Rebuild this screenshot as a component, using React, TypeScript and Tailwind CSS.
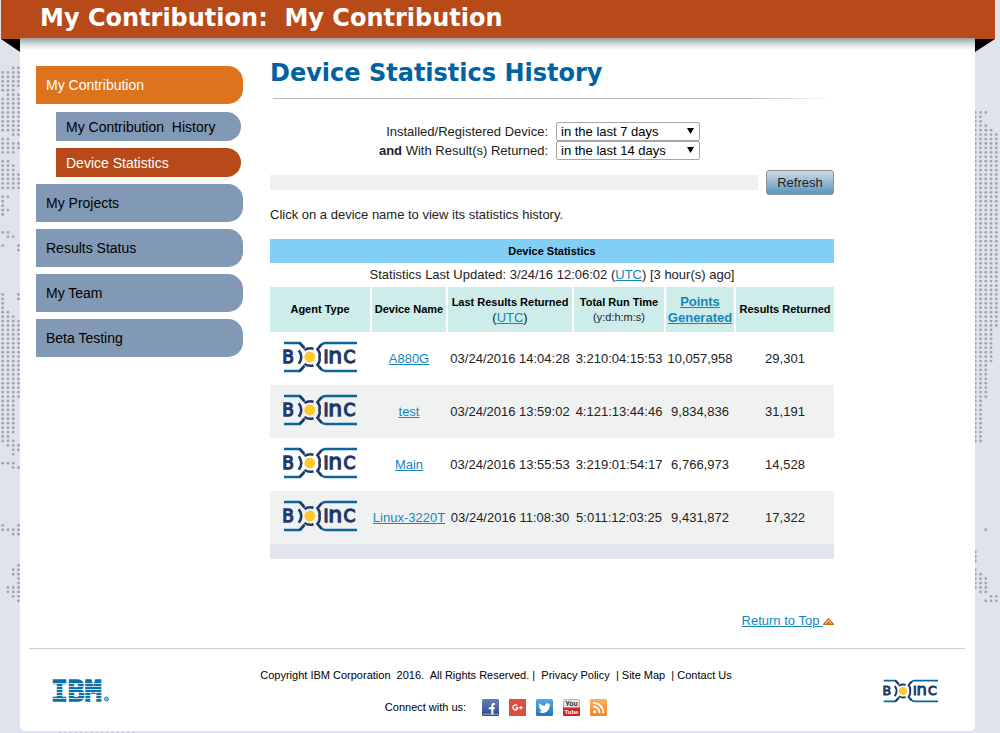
import React, { useState } from 'react';

interface NavItem {
  label: string;
  level: 'top' | 'sub';
  active?: boolean;
}

interface Device {
  name: string;
  lastResult: string;
  runTime: string;
  points: string;
  results: string;
}

// First row, last row and the dot columns that are filled in that range
type DotRange = [number, number, number[]];

const navItems: NavItem[] = [
  { label: 'My Contribution', level: 'top', active: true },
  { label: 'My Contribution\u00a0 History', level: 'sub' },
  { label: 'Device Statistics', level: 'sub', active: true },
  { label: 'My Projects', level: 'top' },
  { label: 'Results Status', level: 'top' },
  { label: 'My Team', level: 'top' },
  { label: 'Beta Testing', level: 'top' }
];

const devices: Device[] = [
  { name: 'A880G', lastResult: '03/24/2016 14:04:28', runTime: '3:210:04:15:53', points: '10,057,958', results: '29,301' },
  { name: 'test', lastResult: '03/24/2016 13:59:02', runTime: '4:121:13:44:46', points: '9,834,836', results: '31,191' },
  { name: 'Main', lastResult: '03/24/2016 13:55:53', runTime: '3:219:01:54:17', points: '6,766,973', results: '14,528' },
  { name: 'Linux-3220T', lastResult: '03/24/2016 11:08:30', runTime: '5:011:12:03:25', points: '9,431,872', results: '17,322' }
];

const periods = ['in the last 7 days', 'in the last 14 days', 'in the last 30 days'];

const leftDots: DotRange[] = [
  [0, 0, [2, 3]], [1, 4, [0, 1, 2, 3]], [5, 5, [0, 1, 2]], [6, 6, [1, 2, 3]], [7, 14, [0, 1, 2, 3]],
  [15, 15, [2, 3]], [16, 16, [0, 1]], [17, 18, [0, 1, 2, 3]], [19, 19, [0, 1, 2]], [21, 21, [0, 1]],
  [22, 23, [0, 1, 2]], [24, 27, [0, 1, 2, 3]], [29, 29, [0, 1]], [30, 31, [0]], [32, 32, [0, 1]],
  [33, 33, [0]], [37, 37, [0, 1]], [38, 38, [1, 2]], [40, 40, [0, 3]], [41, 41, [3]], [51, 52, [0, 3]],
  [53, 54, [0]], [55, 55, [0, 1]], [56, 56, [0, 1, 2]], [57, 74, [0, 1, 2, 3]], [75, 78, [0, 1, 2]],
  [79, 82, [0, 1, 2]], [83, 83, [0, 1]], [84, 84, [0, 1, 2]], [85, 85, [1, 2, 3]], [86, 86, [2, 3]],
  [87, 87, [2]], [89, 89, [0, 1, 2]], [90, 90, [2, 3]], [103, 103, [0, 3]], [104, 104, [0, 1, 2, 3]],
  [105, 105, [2, 3]], [112, 112, [3]], [113, 114, [2, 3]], [115, 116, [3]], [117, 118, [1, 2, 3]],
  [119, 119, [2, 3]], [120, 120, [3]]
];

const rightDots: DotRange[] = [
  [10, 10, [0, 1, 2]], [11, 12, [0, 1]], [13, 13, [0, 1, 2]], [14, 14, [0, 1, 2, 3]],
  [15, 58, [0, 1, 2, 3, 4]], [59, 66, [0, 1, 2, 3]], [67, 74, [0, 1, 2]], [75, 84, [0, 1]],
  [104, 104, [2]], [109, 111, [0]], [113, 113, [0]], [114, 114, [0, 1]], [115, 117, [0, 1, 2]],
  [118, 118, [1, 2]], [119, 119, [3, 4]], [120, 120, [2, 3, 4]]
];

const DotMap = ({ ranges, start }: { ranges: DotRange[]; start: number }) => (
  <svg width="25" height="620" viewBox="0 0 25 620" aria-hidden="true">
    {ranges.flatMap(([from, to, cols]) =>
      Array.from({ length: to - from + 1 }, (_, n) => from + n).flatMap((row) =>
        cols.map((col) => (
          <circle key={`${row}-${col}`} cx={start + col * 5.25} cy={68 + row * 4.44} r="1.4" fill="#9ea4b2" />
        ))
      )
    )}
  </svg>
);

const BoincLogo = ({ className }: { className: string }) => (
  <svg className={className} viewBox="0 0 74 32" role="img" aria-label="BOINC">
    <g fill="none" stroke="#0b669c" strokeWidth="2.4">
      <path d="M1 2H17L21 6" />
      <path d="M74 2H42.5Q40 2 38 4L36 6.2" />
      <path d="M1 30H17L21 26" />
      <path d="M74 30H42.5Q40 30 38 28L36 25.8" />
    </g>
    <g fill="none" stroke="#1f3a68" strokeWidth="2.6">
      <path d="M16.6 2L21.5 7.4" />
      <path d="M16.6 30L21.5 24.6" />
      <path d="M21.4 9Q26 6.2 30.5 7.8" />
      <path d="M21.4 23Q26 25.8 30.5 24.2" />
      <path d="M15.8 9.2Q20.8 16 15.8 22.8" />
      <path d="M38.5 3.4L34.4 8.2Q37.6 12 36.4 16Q37.6 20 34.4 23.8L38.5 28.6" />
    </g>
    <circle cx="26.8" cy="16" r="5.4" fill="#ffc929" />
    <g fill="#1f3a68" stroke="#1f3a68" strokeWidth="1.3" className="font-['DejaVu_Sans']">
      <text x="-0.8" y="22" fontSize="17">B</text>
      <text x="40.4" y="22" fontSize="17">I</text>
      <text x="45.2" y="22" fontSize="22">n</text>
      <text x="60.6" y="22" fontSize="17">C</text>
    </g>
  </svg>
);

const IbmLogo = () => (
  <svg className="h-10 w-[58px]" viewBox="0 0 58 40" role="img" aria-label="IBM">
    <text x="0" y="30" fontSize="28" fill="#0b6fa8" stroke="#0b6fa8" strokeWidth="1.4" className="font-['DejaVu_Sans_Mono'] font-bold">IBM</text>
    {[12, 15, 18, 21, 24, 27].map((y) => (
      <rect key={y} x="0" y={y} width="52" height="1" fill="#fff" fillOpacity="0.75" />
    ))}
    <circle cx="55.5" cy="28" r="2" fill="#8fc0dc" stroke="#0b6fa8" strokeWidth="0.8" />
  </svg>
);

const PeriodSelect = ({ id, initial }: { id: string; initial: string }) => {
  const [value, setValue] = useState(initial);
  return (
    <span className="relative block w-36">
      <select
        id={id}
        value={value}
        onChange={(e) => setValue(e.target.value)}
        className="block h-[19px] w-full appearance-none rounded-xs border border-[#a6a6a6] bg-white pl-1 text-[13px] leading-4 text-black"
      >
        {periods.map((period) => (
          <option key={period}>{period}</option>
        ))}
      </select>
      <svg className="pointer-events-none absolute right-1.5 top-1.5 h-1.5 w-[7px]" viewBox="0 0 7 6" aria-hidden="true">
        <path d="M0 0H7L3.5 6Z" fill="#000" />
      </svg>
    </span>
  );
};

const SocialIcons = () => (
  <div className="flex gap-2.5">
    <a href="#facebook" aria-label="Facebook">
      <svg width="17" height="17" viewBox="0 0 17 17">
        <defs>
          <linearGradient id="fb" x2="0" y2="1">
            <stop stopColor="#6680b6" />
            <stop offset="1" stopColor="#2c4a8c" />
          </linearGradient>
        </defs>
        <rect width="17" height="17" rx="1.5" fill="url(#fb)" />
        <path d="M13 5H11.6Q10.3 5 10.3 6.4V16M6.8 9.2H12.8" fill="none" stroke="#fff" strokeWidth="2.1" />
        <path d="M1 15.2H16" stroke="#a3b4d8" strokeWidth="1" />
      </svg>
    </a>
    <a href="#google" aria-label="Google Plus">
      <svg width="17" height="17" viewBox="0 0 17 17">
        <rect width="17" height="17" fill="#dc4e41" />
        <path d="M8.4 6.9A2.5 2.5 0 1 0 8.9 9H6.6M11.9 7V10.4M10.2 8.7H13.6" fill="none" stroke="#fff" strokeWidth="1.3" />
      </svg>
    </a>
    <a href="#twitter" aria-label="Twitter">
      <svg width="17" height="17" viewBox="0 0 17 17">
        <defs>
          <linearGradient id="tw" x2="0" y2="1">
            <stop stopColor="#58ace0" />
            <stop offset="1" stopColor="#2374b4" />
          </linearGradient>
        </defs>
        <rect width="17" height="17" rx="1.5" fill="url(#tw)" />
        <path
          d="M14.8 5.2L13.5 5.7Q12.6 4.1 11 4.3Q8.9 4.6 8.9 6.9Q5.4 6.7 3.2 4.2Q2.2 6.2 3.9 7.8L2.8 7.5Q3 9.3 4.9 10.1L3.8 10.2Q4.5 11.5 6.2 11.7Q4.5 13 2.2 12.8Q5.2 14.5 8.5 13.7Q13.3 12.4 13.6 6.8Z"
          fill="#fff"
        />
      </svg>
    </a>
    <a href="#youtube" aria-label="YouTube">
      <svg width="17" height="17" viewBox="0 0 17 17">
        <rect x="0.5" y="0.5" width="16" height="16" rx="1.5" fill="#e4e4e4" stroke="#b5b5b5" />
        <path d="M0 8.5H17V15.5Q17 17 15.5 17H1.5Q0 17 0 15.5Z" fill="#d3232a" />
        <g fontSize="7" textAnchor="middle" className="font-['Liberation_Sans'] font-bold">
          <text x="8.5" y="7" fill="#333">You</text>
          <text x="8.5" y="15" fontSize="6" fill="#fff">Tube</text>
        </g>
      </svg>
    </a>
    <a href="#rss" aria-label="RSS">
      <svg width="17" height="17" viewBox="0 0 17 17">
        <defs>
          <linearGradient id="rss" x2="0" y2="1">
            <stop stopColor="#fbb064" />
            <stop offset="1" stopColor="#f58220" />
          </linearGradient>
        </defs>
        <rect width="17" height="17" rx="1.5" fill="url(#rss)" />
        <circle cx="4.6" cy="12.8" r="1.5" fill="#fff" />
        <path d="M3.2 7.6A6.2 6.2 0 0 1 9.6 14.2M3.2 3.8A10 10 0 0 1 13.4 14.2" fill="none" stroke="#fff" strokeWidth="1.8" />
      </svg>
    </a>
  </div>
);

const UtcLink = () => (
  <span>(<a href="#utc" className="text-[#1585bd] underline">UTC</a>)</span>
);

const App = () => {
  return (
    <div className="relative min-h-screen bg-[#dfe3ec] pb-0.5 pl-5 pr-[25px] font-['Liberation_Sans',Arial,sans-serif] text-[13px] leading-4 text-[#222]">
      <div className="absolute left-0 top-0"><DotMap ranges={leftDots} start={2.7} /></div>
      <div className="absolute right-0 top-0"><DotMap ranges={rightDots} start={0.3} /></div>
      <svg className="absolute bottom-0 left-[59px]" width="78" height="2" aria-hidden="true">
        <path d="M0 1.5H78" stroke="#bcc1cd" strokeDasharray="2 3.25" />
      </svg>

      {/* Ribbon */}
      <header className="relative z-10 -ml-[19px] -mr-5 h-[38px] bg-[#b84919] pl-[39px]">
        <h1 className="whitespace-pre pt-0.5 font-['DejaVu_Sans',Verdana,sans-serif] text-2xl font-bold text-white">My Contribution:  My Contribution</h1>
        <svg className="absolute left-0 top-[38px]" width="19" height="14" aria-hidden="true">
          <path d="M0 0H19V1H0Z" fill="#b84919" />
          <path d="M0 1H19V14Z" fill="#000" />
        </svg>
        <svg className="absolute right-0 top-[38px]" width="20" height="14" aria-hidden="true">
          <path d="M0 0H20V1H0Z" fill="#b84919" />
          <path d="M0 1H20L0 14Z" fill="#000" />
        </svg>
      </header>

      <div className="relative rounded-b-[5px] bg-white">
        <div className="h-3 bg-linear-to-b from-[#9c9f9c] via-[#d5dae3] to-white" />

        <div className="flex px-4">
          {/* Side menu */}
          <nav className="w-[207px] shrink-0 pt-4">
            <ul className="flex flex-col gap-[7px] text-sm">
              {navItems.map((item) => (
                <li key={item.label} className={item.level === 'sub' ? 'pl-5 pr-0.5' : 'first:mb-px'}>
                  <a
                    href="#menu"
                    className={`flex items-center rounded-r-[15px] pl-2.5 ${
                      item.level === 'top' ? 'h-[38px]' : 'h-[29px]'
                    } ${
                      !item.active ? 'bg-[#8299b5] text-black' :
                      item.level === 'top' ? 'bg-[#dd731c] text-white' :
                      'bg-[#b84919] text-white'
                    }`}
                  >
                    {item.label}
                  </a>
                </li>
              ))}
            </ul>
          </nav>

          <main className="ml-[27px] max-w-[564px] flex-1 pt-[7px]">
            <h2 className="font-['DejaVu_Sans',Verdana,sans-serif] text-2xl font-bold text-[#0062a0]">Device Statistics History</h2>
            <div className="ml-[3px] mt-[9px] h-px bg-linear-to-r from-[#bbb] from-85% to-white" />

            {/* Filters */}
            <form onSubmit={(e) => e.preventDefault()}>
              <div className="mt-[23px] grid grid-cols-[278px_1fr] items-center gap-x-2">
                <label htmlFor="installed" className="text-right">Installed/Registered Device:</label>
                <PeriodSelect id="installed" initial="in the last 7 days" />
                <label htmlFor="returned" className="text-right"><b>and</b> With Result(s) Returned:</label>
                <PeriodSelect id="returned" initial="in the last 14 days" />
              </div>
              <div className="mt-2.5 flex items-center gap-2">
                <div className="h-[15px] flex-1 bg-[#efefef]" />
                <button className="h-[25px] w-[68px] rounded-[3px] border border-[#8b939b] bg-linear-to-b from-[#cfdae5] to-[#5795bd] text-[#222]">
                  Refresh
                </button>
              </div>
            </form>

            <p className="mb-4 mt-3">Click on a device name to view its statistics history.</p>

            <table className="w-full table-fixed border-separate border-spacing-0 text-center">
              <colgroup>
                <col className="w-[102px]" />
                <col className="w-[76px]" />
                <col className="w-[126px]" />
                <col className="w-[92px]" />
                <col className="w-[70px]" />
                <col />
              </colgroup>
              <thead>
                <tr className="h-6 bg-[#82cff5] text-[11px] text-black">
                  <th colSpan={6}>Device Statistics</th>
                </tr>
                <tr className="h-6">
                  <td colSpan={6}>Statistics Last Updated: 3/24/16 12:06:02 <UtcLink /> [3 hour(s) ago]</td>
                </tr>
                <tr className="h-[45px] whitespace-nowrap bg-[#cdecea] text-[11px] leading-[15px] text-black">
                  <th className="border-r-2 border-white">Agent Type</th>
                  <th className="border-r-2 border-white">Device Name</th>
                  <th className="border-r-2 border-white">
                    Last Results Returned
                    <div className="text-[13px] font-normal leading-[15px] text-[#222]"><UtcLink /></div>
                  </th>
                  <th className="border-r-2 border-white">
                    Total Run Time
                    <div className="font-normal text-[#222]">(y:d:h:m:s)</div>
                  </th>
                  <th className="border-r-2 border-white">
                    <a href="#points" className="text-[13px] leading-[15px] text-[#1585bd] underline">Points<br />Generated</a>
                  </th>
                  <th>Results Returned</th>
                </tr>
              </thead>
              <tbody className="whitespace-nowrap">
                {devices.map((device) => (
                  <tr key={device.name} className="h-[53px] even:bg-[#f0f2f1]">
                    <td><BoincLogo className="mb-1 ml-[13px] h-8 w-[74px]" /></td>
                    <td className="pr-0.5"><a href="#device" className="text-[#1585bd] underline">{device.name}</a></td>
                    <td className="pr-0.5">{device.lastResult}</td>
                    <td className="pr-0.5">{device.runTime}</td>
                    <td className="pr-0.5">{device.points}</td>
                    <td>{device.results}</td>
                  </tr>
                ))}
              </tbody>
            </table>
            <div className="h-[15px] bg-[#e0e5ee]" />

            <div className="mt-[54px] text-right">
              <a href="#top" className="inline-flex items-center text-[#1585bd]">
                <span className="whitespace-pre underline">Return to Top </span>
                <svg width="11" height="7" viewBox="0 0 11 7" aria-hidden="true">
                  <path d="M5.5 0.7L10.3 6.3H0.7Z" fill="#f3d3ac" stroke="#cf6a05" strokeWidth="1.3" />
                  <path d="M5.5 3L7.5 6H3.5Z" fill="#cf6a05" />
                </svg>
              </a>
            </div>
          </main>
        </div>

        {/* Footer */}
        <footer className="ml-[9px] mr-2.5 mt-[19px] border-t border-[#d0d0d0]">
          <div className="flex h-[82px] items-center justify-between pl-[22px] pr-[27px] pt-0.5">
            <IbmLogo />
            <div className="text-center text-[11px] text-black">
              <p className="whitespace-pre">
                Copyright IBM Corporation  2016.  All Rights Reserved. |  <a href="#privacy">Privacy Policy</a>  | <a href="#map">Site Map</a>  | <a href="#contact">Contact Us</a>
              </p>
              <div className="mt-4 flex items-center justify-center gap-4">
                <span>Connect with us:</span>
                <SocialIcons />
              </div>
            </div>
            <BoincLogo className="h-6 w-[55px]" />
          </div>
        </footer>
      </div>
    </div>
  );
};

export default App;
